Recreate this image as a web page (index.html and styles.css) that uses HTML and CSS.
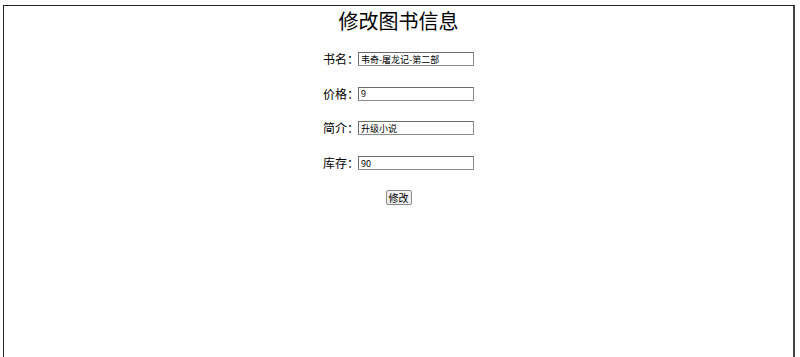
FILE: index.html
```html
<!DOCTYPE html>
<html lang="zh-CN">
<head>
<meta charset="utf-8">
<title>修改图书信息</title>
<link rel="stylesheet" href="styles.css">
</head>
<body>
<div class="frame">
  <h2 class="title">修改图书信息</h2>
  <form class="form">
    <div class="row"><label class="label">书名：</label><input class="field" type="text" value="韦奇-屠龙记-第二部"></div>
    <div class="row"><label class="label">价格：</label><input class="field" type="text" value="9"></div>
    <div class="row"><label class="label">简介：</label><input class="field" type="text" value="升级小说"></div>
    <div class="row"><label class="label">库存：</label><input class="field" type="text" value="90"></div>
    <div class="row"><button class="btn" type="button">修改</button></div>
  </form>
</div>
</body>
</html>
```
FILE: styles.css
```css
html, body {
  margin: 0;
  padding: 0;
  background: #fff;
  height: 100%;
  overflow: hidden;
}
body {
  font-family: "Noto Sans CJK SC", "Liberation Sans", sans-serif;
  color: #000;
}
.frame {
  margin: 5px 5px 0 3px;
  border: 1px solid #222;
  border-right: 2px solid #444;
  border-bottom: none;
  height: calc(100% - 5px);
  box-sizing: border-box;
}
.title {
  margin: 0;
  padding-top: 2px;
  text-align: center;
  font-size: 20px;
  line-height: 26px;
  font-weight: normal;
}
.form {
  margin-top: 18px;
  display: flex;
  flex-direction: column;
  align-items: center;
  gap: 20.7px;
}
.row {
  display: flex;
  align-items: center;
  height: 14px;
}
.label {
  font-size: 12px;
  line-height: 14px;
  width: 35px;
  white-space: nowrap;
}
.field {
  box-sizing: border-box;
  width: 116px;
  height: 14px;
  margin: 0;
  padding: 0 2px;
  border: 1px solid #8a8a8a;
  border-top-color: #6a6a6a;
  border-left-color: #6a6a6a;
  border-radius: 1px;
  font-family: "Noto Sans CJK SC", "Liberation Sans", sans-serif;
  font-size: 9px;
  line-height: 12px;
  color: #000;
  background: #fff;
}
.btn {
  box-sizing: border-box;
  height: 15px;
  margin: 0;
  padding: 0 2px;
  border: 1px solid #8a8a8a;
  border-radius: 2px;
  background: #efefef;
  font-family: "Noto Sans CJK SC", "Liberation Sans", sans-serif;
  font-size: 10px;
  line-height: 13px;
  color: #000;
}
```
